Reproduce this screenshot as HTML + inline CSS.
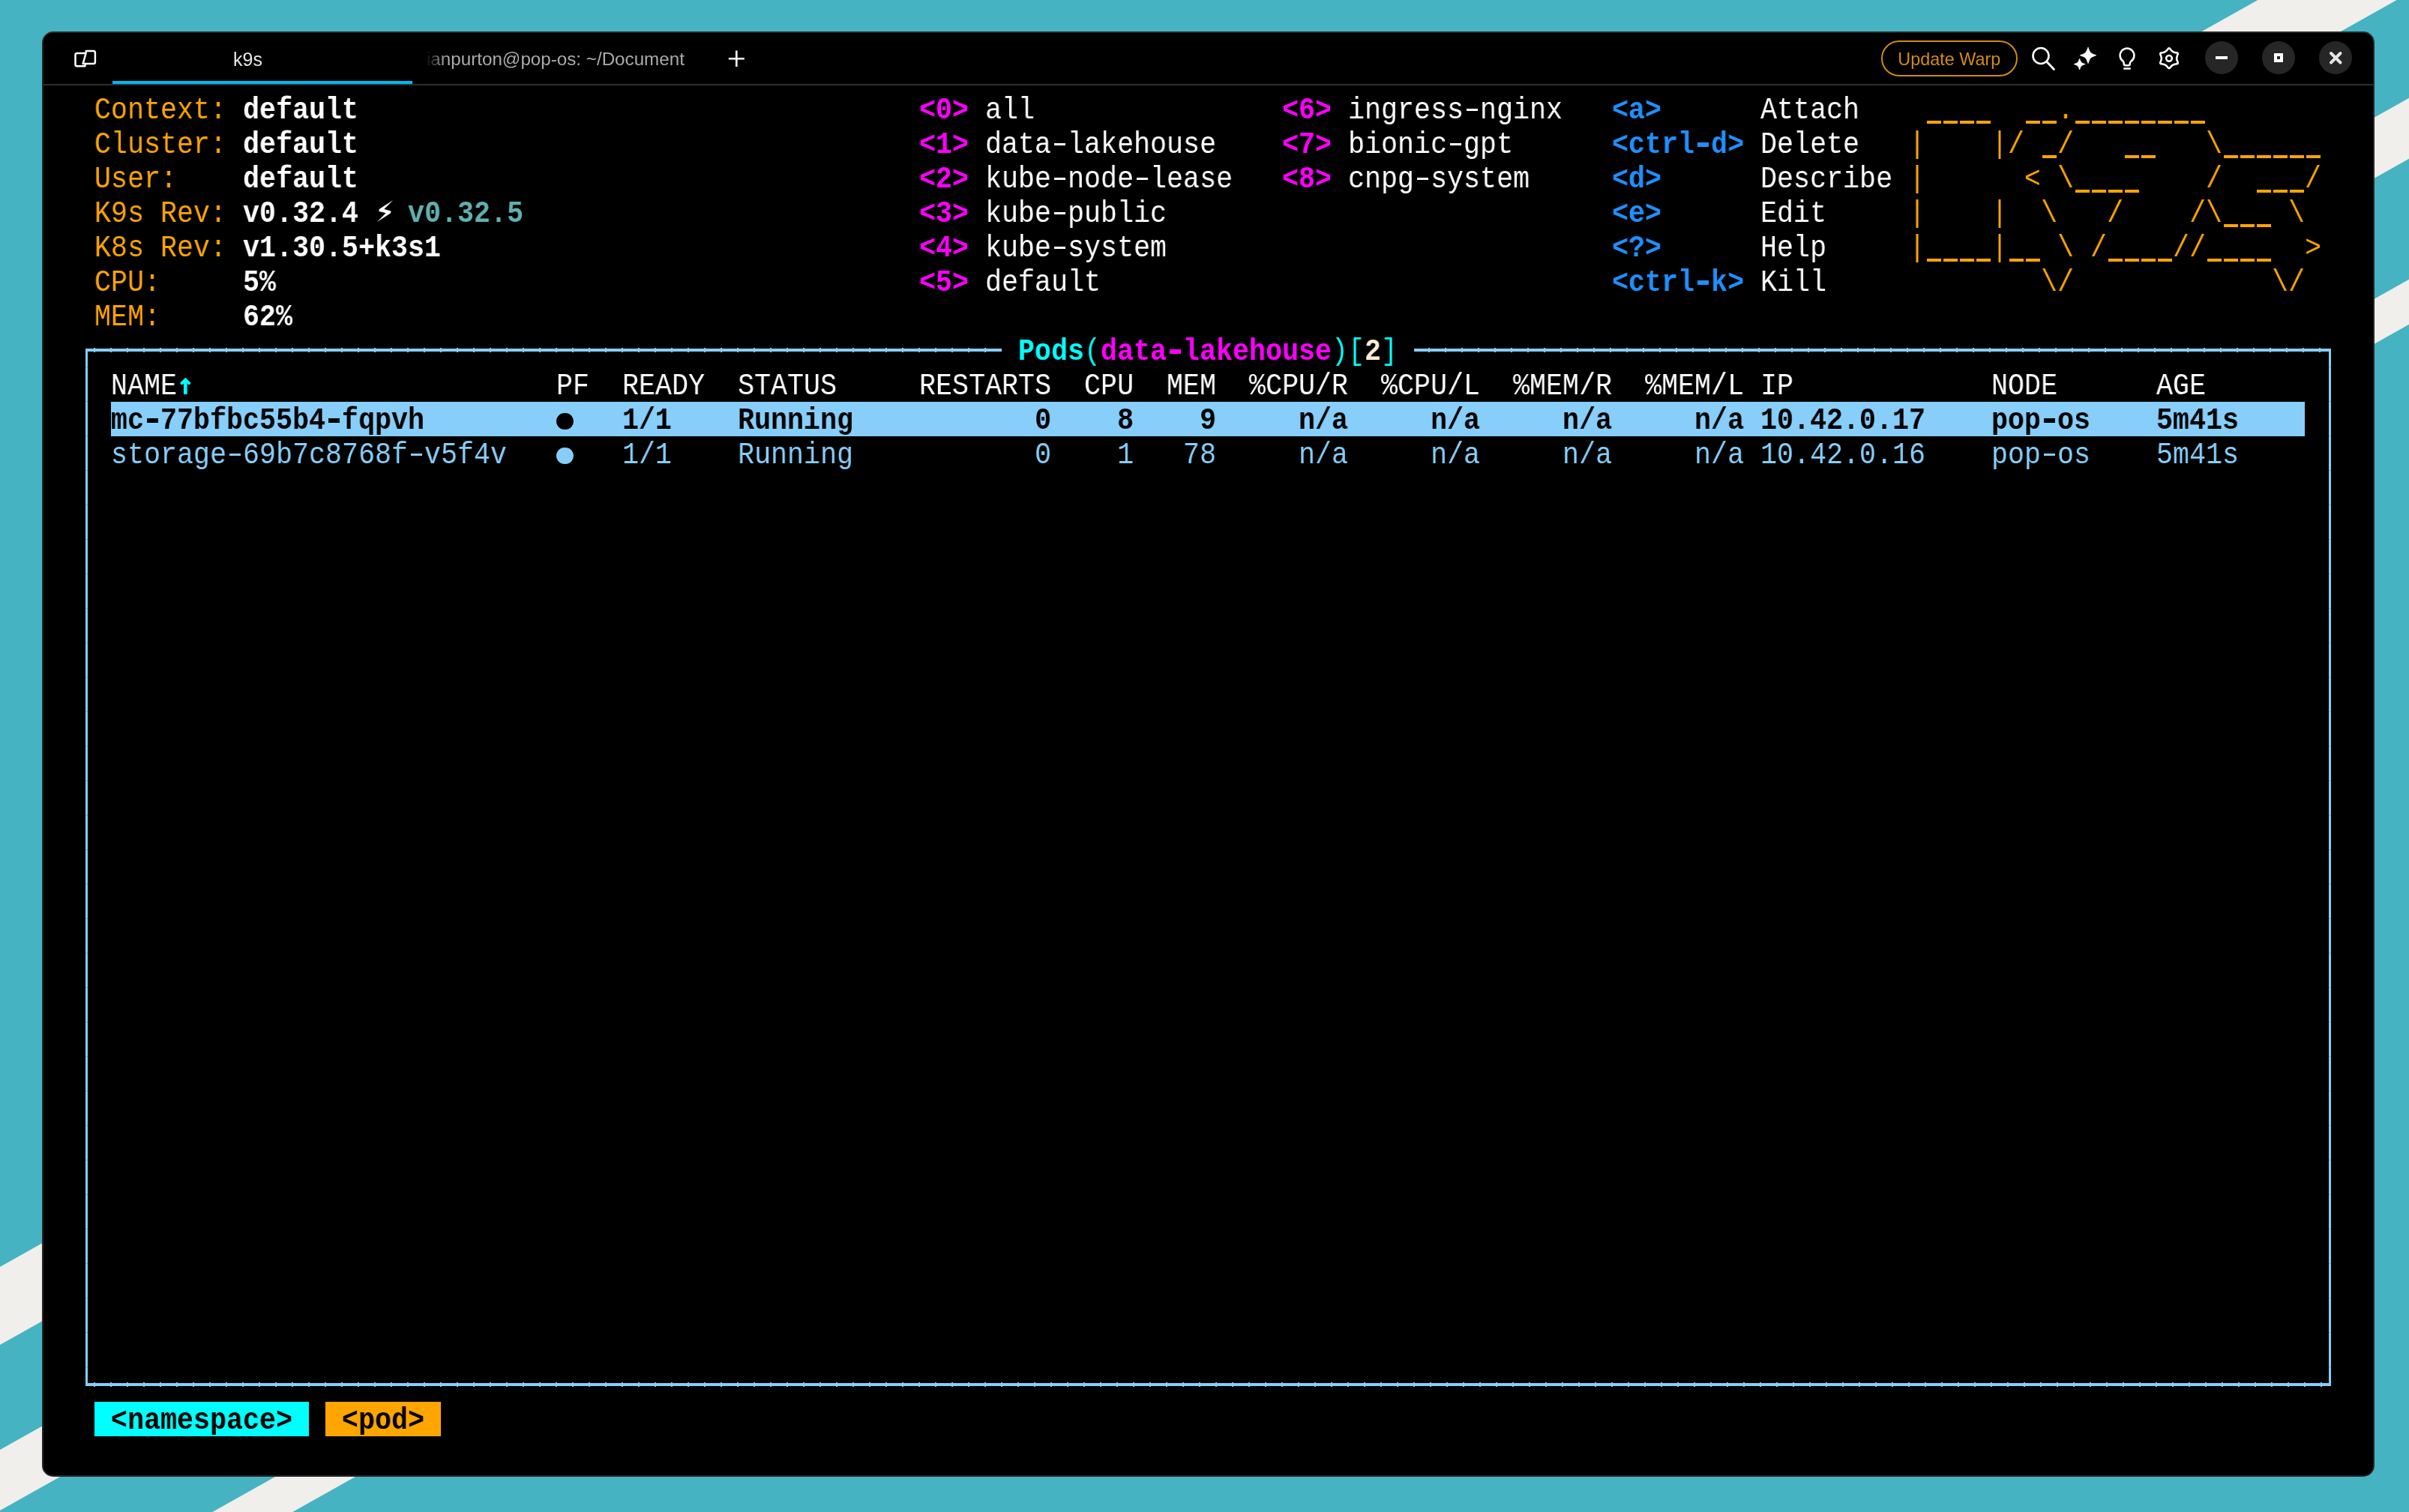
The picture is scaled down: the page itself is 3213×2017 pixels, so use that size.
<!DOCTYPE html>
<html><head><meta charset="utf-8"><title>k9s</title>
<style>
html,body{margin:0;padding:0;}
body{width:3213px;height:2017px;overflow:hidden;position:relative;background:#45b3c2;font-family:"Liberation Sans",sans-serif;}
.abs{position:absolute;}
#bg{position:absolute;left:0;top:0;}
#win{position:absolute;left:56px;top:42px;width:3111px;height:1927.5px;box-sizing:border-box;border:2px solid #2a2627;border-radius:15px;background:#000;}
#sep{left:58px;top:112px;width:3107px;height:2px;background:#2e2e2e;}
#uline{left:150px;top:108px;width:400px;height:4px;background:#00b9f2;}
.tabt{position:absolute;will-change:transform;top:62px;font-size:25px;line-height:30px;white-space:pre;}
#pill{will-change:transform;left:2509px;top:54px;width:181.5px;height:48px;box-sizing:border-box;border:2px solid #cf8b12;border-radius:24px;color:#d28c12;font-size:23.4px;line-height:46px;text-align:center;}
.circ{position:absolute;top:55px;width:44px;height:44px;border-radius:22px;background:#262626;}
.fl{position:absolute;background:#87cefa;}
.hy{position:absolute;}
.us{position:absolute;width:19.5px;height:3.8px;background:#ffa500;}
.dot{position:absolute;width:22.8px;height:22.8px;border-radius:50%;}
#sel{left:148px;top:536px;width:2926px;height:46px;background:#87cefa;}
.term{position:absolute;left:104px;top:0;width:3370px;height:2017px;transform:scaleX(0.905202);transform-origin:0 0;will-change:transform;font-family:"Liberation Mono",monospace;font-size:40.500px;}
.row{position:absolute;left:0;width:3370px;height:46px;line-height:46px;white-space:pre;}
.row span{position:absolute;top:0;}
</style></head><body>
<svg id="bg" width="3213" height="2017" viewBox="0 0 3213 2017">
<polygon fill="#f0efeb" points="0,1690 3011.4,0 3196.7,0 0,1794"/>
<polygon fill="#f0efeb" points="0,1934 3446.2,0 3590.5,0 0,2015"/>
<polygon fill="#f0efeb" points="0,2176 3877.4,0 3984.3,0 0,2236"/>
</svg>
<div id="win"></div>
<div id="sep" class="abs"></div>
<div id="uline" class="abs"></div>
<svg class="abs" style="left:90px;top:58px" width="48" height="40" viewBox="90 58 48 40">
<path d="M113.8 70.9 L102.8 70.9 Q100.5 70.9 100.5 73.2 L100.5 86 Q100.5 88.3 102.8 88.3 L113.3 88.3 L114 85.3" fill="none" stroke="#fff" stroke-width="2.5" stroke-linejoin="round"/>
<path d="M114.8 68.1 L124.6 68.1 Q126.9 68.1 126.9 70.4 L126.9 82.7 Q126.9 85 124.6 85 L110.6 85 L114.3 72 Z" fill="none" stroke="#fff" stroke-width="2.5" stroke-linejoin="round"/>
</svg>
<div class="tabt" style="left:311px;top:64px;font-size:25px;color:#e6e6e6">k9s</div>
<div class="tabt" style="left:569px;top:63.5px;font-size:24.2px;color:#ababab">ianpurton@pop-os: ~/Document</div>
<div class="abs" style="left:550px;top:60px;width:42px;height:40px;background:linear-gradient(90deg,#000 0px,rgba(0,0,0,0.9) 20px,rgba(0,0,0,0.72) 26px,rgba(0,0,0,0.35) 34px,rgba(0,0,0,0) 44px)"></div>
<svg class="abs" style="left:965px;top:60px" width="36" height="36" viewBox="965 60 36 36">
<path d="M982.3 67.5 V89 M971.8 78.2 H992.8" stroke="#fff" stroke-width="2.6"/>
</svg>
<div id="pill" class="abs">Update Warp</div>
<svg class="abs" style="left:2700px;top:55px" width="220" height="45" viewBox="2700 55 220 45">
<circle cx="2722" cy="74.5" r="10.5" fill="none" stroke="#fff" stroke-width="2.6"/>
<path d="M2729.5 82 L2739.5 92.5" stroke="#fff" stroke-width="2.8" stroke-linecap="round"/>
<path d="M2785.00 62.90 L2786.86 67.80 Q2788.00 70.80 2791.00 71.94 L2795.90 73.80 L2791.00 75.66 Q2788.00 76.80 2786.86 79.80 L2785.00 84.70 L2783.14 79.80 Q2782.00 76.80 2779.00 75.66 L2774.10 73.80 L2779.00 71.94 Q2782.00 70.80 2783.14 67.80 L2785.00 62.90 Z" fill="#fff" stroke="#fff" stroke-width="0.6" stroke-linejoin="round"/>
<path d="M2773.60 78.10 L2774.90 81.45 Q2775.70 83.50 2777.75 84.30 L2781.10 85.60 L2777.75 86.90 Q2775.70 87.70 2774.90 89.75 L2773.60 93.10 L2772.30 89.75 Q2771.50 87.70 2769.45 86.90 L2766.10 85.60 L2769.45 84.30 Q2771.50 83.50 2772.30 81.45 L2773.60 78.10 Z" fill="#fff" stroke="#fff" stroke-width="0.6" stroke-linejoin="round"/>
<path d="M2831.8 81.8 A9.4 9.4 0 1 1 2842.2 81.8 Q2840.7 83.2 2840.7 85 L2840.7 85.3 Q2840.7 87.3 2838.7 87.3 L2834.8 87.3 Q2832.8 87.3 2832.8 85.3 L2832.8 85 Q2832.8 83.2 2831.8 81.8 Z" fill="none" stroke="#fff" stroke-width="2.5" stroke-linejoin="round"/>
<path d="M2833.3 91.5 H2840.7" stroke="#fff" stroke-width="2.6" stroke-linecap="round"/>
<g transform="translate(2893 77.8)">
<path d="M-1.40 -12.50 Q0.00 -14.40 1.39 -12.50 L2.32 -11.23 Q4.65 -8.05 8.56 -7.63 L10.12 -7.46 Q12.47 -7.20 11.52 -5.04 L10.89 -3.60 Q9.30 -0.00 10.89 3.60 L11.52 5.04 Q12.47 7.20 10.12 7.46 L8.56 7.63 Q4.65 8.05 2.33 11.23 L1.40 12.50 Q0.00 14.40 -1.39 12.50 L-2.32 11.23 Q-4.65 8.05 -8.56 7.63 L-10.12 7.46 Q-12.47 7.20 -11.52 5.04 L-10.89 3.60 Q-9.30 0.00 -10.89 -3.60 L-11.52 -5.04 Q-12.47 -7.20 -10.12 -7.46 L-8.56 -7.63 Q-4.65 -8.05 -2.33 -11.23 Z" fill="none" stroke="#fff" stroke-width="2.6" stroke-linejoin="round"/>
<circle cx="0" cy="0" r="3.85" fill="none" stroke="#fff" stroke-width="2.6"/>
</g>
</svg>
<div class="circ" style="left:2941px"></div>
<div class="circ" style="left:3017px"></div>
<div class="circ" style="left:3093px"></div>
<div class="abs" style="left:2955px;top:74.5px;width:16.2px;height:4.7px;background:#fff"></div>
<div class="abs" style="left:3032.5px;top:70.8px;width:12.5px;height:12.5px;box-sizing:border-box;border:4.2px solid #fff"></div>
<svg class="abs" style="left:3100px;top:62px" width="30" height="30" viewBox="3100 62 30 30">
<path d="M3109 71 L3121.5 83.5 M3121.5 71 L3109 83.5" stroke="#e6e6e6" stroke-width="4" stroke-linecap="round"/>
</svg>
<!-- frame -->
<div class="abs" style="left:114px;top:464.3px;width:1210px;height:5.3px;background:repeating-linear-gradient(90deg,rgba(0,0,0,0) 0px,rgba(0,0,0,0) 11.2px,#80c4ee 11.2px,#80c4ee 12.8px,rgba(0,0,0,0) 12.8px,rgba(0,0,0,0) 22px)"></div>
<div class="abs" style="left:1894px;top:464.3px;width:1210px;height:5.3px;background:repeating-linear-gradient(90deg,rgba(0,0,0,0) 0px,rgba(0,0,0,0) 11.2px,#80c4ee 11.2px,#80c4ee 12.8px,rgba(0,0,0,0) 12.8px,rgba(0,0,0,0) 22px)"></div>
<div class="abs" style="left:114px;top:1844.3px;width:2990px;height:5.3px;background:repeating-linear-gradient(90deg,rgba(0,0,0,0) 0px,rgba(0,0,0,0) 11.2px,#80c4ee 11.2px,#80c4ee 12.8px,rgba(0,0,0,0) 12.8px,rgba(0,0,0,0) 22px)"></div>

<div class="fl" style="left:114px;top:465px;width:1222.4px;height:3.8px"></div>
<div class="fl" style="left:1885.6px;top:465px;width:1223.2px;height:3.8px"></div>
<div class="fl" style="left:114px;top:465px;width:3.2px;height:1383.8px;background:repeating-linear-gradient(180deg,#87cefa 0px,#87cefa 24px,#6fadd4 24px,#6fadd4 25px,#87cefa 25px,#87cefa 46px)"></div>
<div class="fl" style="left:3105.8px;top:465px;width:3px;height:1383.8px;background:repeating-linear-gradient(180deg,#87cefa 0px,#87cefa 24px,#6fadd4 24px,#6fadd4 25px,#87cefa 25px,#87cefa 46px)"></div>
<div class="fl" style="left:114px;top:1845px;width:2994.8px;height:3.8px"></div>
<div id="sel" class="abs"></div>
<div class="abs" style="left:126px;top:1869.5px;width:286px;height:46px;background:#00ffff"></div>
<div class="abs" style="left:434px;top:1869.5px;width:154px;height:46px;background:#ffa500"></div>
<!-- lightning -->
<svg class="abs" style="left:495px;top:260px" width="35" height="42" viewBox="495 260 35 42">
<polygon points="524,267.2 512.3,279 521.6,281.4 520.8,284.4 502.8,296.2 514.6,284.2 505.4,282 505.8,279" fill="#fff"/>
</svg>
<svg class="abs" style="left:236px;top:500px" width="24" height="30" viewBox="236 500 24 30">
<path d="M247.3 508 V526" stroke="#00ffff" stroke-width="4.7"/>
<path d="M242.5 511.2 L247.3 506.6 L252.1 511.2" fill="none" stroke="#00ffff" stroke-width="4" stroke-linecap="round" stroke-linejoin="miter"/>
</svg>
<div class="dot" style="left:742.2px;top:550.6px;background:#000"></div>
<div class="dot" style="left:742.2px;top:596.6px;background:#87cefa"></div>
<div class="us" style="left:2569.5px;top:161.3px"></div>
<div class="us" style="left:2591.5px;top:161.3px"></div>
<div class="us" style="left:2613.5px;top:161.3px"></div>
<div class="us" style="left:2635.5px;top:161.3px"></div>
<div class="us" style="left:2701.5px;top:161.3px"></div>
<div class="us" style="left:2723.5px;top:161.3px"></div>
<div class="us" style="left:2767.5px;top:161.3px"></div>
<div class="us" style="left:2789.5px;top:161.3px"></div>
<div class="us" style="left:2811.5px;top:161.3px"></div>
<div class="us" style="left:2833.5px;top:161.3px"></div>
<div class="us" style="left:2855.5px;top:161.3px"></div>
<div class="us" style="left:2877.5px;top:161.3px"></div>
<div class="us" style="left:2899.5px;top:161.3px"></div>
<div class="us" style="left:2921.5px;top:161.3px"></div>
<div class="us" style="left:2723.5px;top:207.3px"></div>
<div class="us" style="left:2833.5px;top:207.3px"></div>
<div class="us" style="left:2855.5px;top:207.3px"></div>
<div class="us" style="left:2965.5px;top:207.3px"></div>
<div class="us" style="left:2987.5px;top:207.3px"></div>
<div class="us" style="left:3009.5px;top:207.3px"></div>
<div class="us" style="left:3031.5px;top:207.3px"></div>
<div class="us" style="left:3053.5px;top:207.3px"></div>
<div class="us" style="left:3075.5px;top:207.3px"></div>
<div class="us" style="left:2767.5px;top:253.3px"></div>
<div class="us" style="left:2789.5px;top:253.3px"></div>
<div class="us" style="left:2811.5px;top:253.3px"></div>
<div class="us" style="left:2833.5px;top:253.3px"></div>
<div class="us" style="left:3009.5px;top:253.3px"></div>
<div class="us" style="left:3031.5px;top:253.3px"></div>
<div class="us" style="left:3053.5px;top:253.3px"></div>
<div class="us" style="left:2965.5px;top:299.3px"></div>
<div class="us" style="left:2987.5px;top:299.3px"></div>
<div class="us" style="left:3009.5px;top:299.3px"></div>
<div class="us" style="left:2569.5px;top:345.3px"></div>
<div class="us" style="left:2591.5px;top:345.3px"></div>
<div class="us" style="left:2613.5px;top:345.3px"></div>
<div class="us" style="left:2635.5px;top:345.3px"></div>
<div class="us" style="left:2679.5px;top:345.3px"></div>
<div class="us" style="left:2701.5px;top:345.3px"></div>
<div class="us" style="left:2811.5px;top:345.3px"></div>
<div class="us" style="left:2833.5px;top:345.3px"></div>
<div class="us" style="left:2855.5px;top:345.3px"></div>
<div class="us" style="left:2877.5px;top:345.3px"></div>
<div class="us" style="left:2943.5px;top:345.3px"></div>
<div class="us" style="left:2965.5px;top:345.3px"></div>
<div class="us" style="left:2987.5px;top:345.3px"></div>
<div class="us" style="left:3009.5px;top:345.3px"></div>
<div class="term">
<div class="row" style="top:124.17px"><span style="left:24.304px;color:#ffa500;">Context:</span><span style="left:243.040px;color:#ffffff;font-weight:bold;">default</span><span style="left:1239.502px;color:#ff00ff;font-weight:bold;">&lt;0&gt;</span><span style="left:1336.718px;color:#ffffff;">all</span><span style="left:1774.189px;color:#ff00ff;font-weight:bold;">&lt;6&gt;</span><span style="left:1871.405px;color:#ffffff;">ingress nginx</span><span style="left:2260.268px;color:#1e90ff;font-weight:bold;">&lt;a&gt;</span><span style="left:2479.003px;color:#ffffff;">Attach</span><span style="left:2697.739px;color:#ffa500;">         .               </span></div>
<div class="row" style="top:170.17px"><span style="left:24.304px;color:#ffa500;">Cluster:</span><span style="left:243.040px;color:#ffffff;font-weight:bold;">default</span><span style="left:1239.502px;color:#ff00ff;font-weight:bold;">&lt;1&gt;</span><span style="left:1336.718px;color:#ffffff;">data lakehouse</span><span style="left:1774.189px;color:#ff00ff;font-weight:bold;">&lt;7&gt;</span><span style="left:1871.405px;color:#ffffff;">bionic gpt</span><span style="left:2260.268px;color:#1e90ff;font-weight:bold;">&lt;ctrl d&gt;</span><span style="left:2479.003px;color:#ffffff;">Delete</span><span style="left:2697.739px;color:#ffa500;">|    |/  /        \      </span></div>
<div class="row" style="top:216.17px"><span style="left:24.304px;color:#ffa500;">User:</span><span style="left:243.040px;color:#ffffff;font-weight:bold;">default</span><span style="left:1239.502px;color:#ff00ff;font-weight:bold;">&lt;2&gt;</span><span style="left:1336.718px;color:#ffffff;">kube node lease</span><span style="left:1774.189px;color:#ff00ff;font-weight:bold;">&lt;8&gt;</span><span style="left:1871.405px;color:#ffffff;">cnpg system</span><span style="left:2260.268px;color:#1e90ff;font-weight:bold;">&lt;d&gt;</span><span style="left:2479.003px;color:#ffffff;">Describe</span><span style="left:2697.739px;color:#ffa500;">|      &lt; \        /     /</span></div>
<div class="row" style="top:262.17px"><span style="left:24.304px;color:#ffa500;">K9s Rev:</span><span style="left:243.040px;color:#ffffff;font-weight:bold;">v0.32.4</span><span style="left:486.079px;color:#62b0b0;font-weight:bold;">v0.32.5</span><span style="left:1239.502px;color:#ff00ff;font-weight:bold;">&lt;3&gt;</span><span style="left:1336.718px;color:#ffffff;">kube public</span><span style="left:2260.268px;color:#1e90ff;font-weight:bold;">&lt;e&gt;</span><span style="left:2479.003px;color:#ffffff;">Edit</span><span style="left:2697.739px;color:#ffa500;">|    |  \   /    /\    \ </span></div>
<div class="row" style="top:308.17px"><span style="left:24.304px;color:#ffa500;">K8s Rev:</span><span style="left:243.040px;color:#ffffff;font-weight:bold;">v1.30.5+k3s1</span><span style="left:1239.502px;color:#ff00ff;font-weight:bold;">&lt;4&gt;</span><span style="left:1336.718px;color:#ffffff;">kube system</span><span style="left:2260.268px;color:#1e90ff;font-weight:bold;">&lt;?&gt;</span><span style="left:2479.003px;color:#ffffff;">Help</span><span style="left:2697.739px;color:#ffa500;">|    |   \ /    //      &gt;</span></div>
<div class="row" style="top:354.17px"><span style="left:24.304px;color:#ffa500;">CPU:</span><span style="left:243.040px;color:#ffffff;font-weight:bold;">5%</span><span style="left:1239.502px;color:#ff00ff;font-weight:bold;">&lt;5&gt;</span><span style="left:1336.718px;color:#ffffff;">default</span><span style="left:2260.268px;color:#1e90ff;font-weight:bold;">&lt;ctrl k&gt;</span><span style="left:2479.003px;color:#ffffff;">Kill</span><span style="left:2697.739px;color:#ffa500;">        \/            \/ </span></div>
<div class="row" style="top:400.17px"><span style="left:24.304px;color:#ffa500;">MEM:</span><span style="left:243.040px;color:#ffffff;font-weight:bold;">62%</span></div>
<div class="row" style="top:446.17px"><span style="left:1385.325px;color:#00ffff;font-weight:bold;">Pods</span><span style="left:1482.541px;color:#00ffff;">(</span><span style="left:1506.845px;color:#ff00ff;font-weight:bold;">data lakehouse</span><span style="left:1847.101px;color:#00ffff;">)</span><span style="left:1871.405px;color:#00ffff;">[</span><span style="left:1895.708px;color:#ffefd5;font-weight:bold;">2</span><span style="left:1920.012px;color:#00ffff;">]</span></div>
<div class="row" style="top:492.17px"><span style="left:48.608px;color:#ffffff;">NAME</span><span style="left:704.815px;color:#ffffff;">PF</span><span style="left:802.031px;color:#ffffff;">READY</span><span style="left:972.158px;color:#ffffff;">STATUS</span><span style="left:1239.502px;color:#ffffff;">RESTARTS</span><span style="left:1482.541px;color:#ffffff;">CPU</span><span style="left:1604.061px;color:#ffffff;">MEM</span><span style="left:1725.581px;color:#ffffff;">%CPU/R</span><span style="left:1920.012px;color:#ffffff;">%CPU/L</span><span style="left:2114.444px;color:#ffffff;">%MEM/R</span><span style="left:2308.876px;color:#ffffff;">%MEM/L</span><span style="left:2479.003px;color:#ffffff;">IP</span><span style="left:2819.259px;color:#ffffff;">NODE</span><span style="left:3062.298px;color:#ffffff;">AGE</span></div>
<div class="row" style="top:538.17px"><span style="left:48.608px;color:#000000;font-weight:bold;">mc 77bfbc55b4 fqpvh</span><span style="left:802.031px;color:#000000;font-weight:bold;">1/1</span><span style="left:972.158px;color:#000000;font-weight:bold;">Running</span><span style="left:1409.629px;color:#000000;font-weight:bold;">0</span><span style="left:1531.149px;color:#000000;font-weight:bold;">8</span><span style="left:1652.669px;color:#000000;font-weight:bold;">9</span><span style="left:1798.493px;color:#000000;font-weight:bold;">n/a</span><span style="left:1992.924px;color:#000000;font-weight:bold;">n/a</span><span style="left:2187.356px;color:#000000;font-weight:bold;">n/a</span><span style="left:2381.788px;color:#000000;font-weight:bold;">n/a</span><span style="left:2479.003px;color:#000000;font-weight:bold;">10.42.0.17</span><span style="left:2819.259px;color:#000000;font-weight:bold;">pop os</span><span style="left:3062.298px;color:#000000;font-weight:bold;">5m41s</span></div>
<div class="row" style="top:584.17px"><span style="left:48.608px;color:#87cefa;">storage 69b7c8768f v5f4v</span><span style="left:802.031px;color:#87cefa;">1/1</span><span style="left:972.158px;color:#87cefa;">Running</span><span style="left:1409.629px;color:#87cefa;">0</span><span style="left:1531.149px;color:#87cefa;">1</span><span style="left:1628.365px;color:#87cefa;">78</span><span style="left:1798.493px;color:#87cefa;">n/a</span><span style="left:1992.924px;color:#87cefa;">n/a</span><span style="left:2187.356px;color:#87cefa;">n/a</span><span style="left:2381.788px;color:#87cefa;">n/a</span><span style="left:2479.003px;color:#87cefa;">10.42.0.16</span><span style="left:2819.259px;color:#87cefa;">pop os</span><span style="left:3062.298px;color:#87cefa;">5m41s</span></div>
<div class="row" style="top:1872.17px"><span style="left:24.304px;color:#000000;font-weight:bold;"> &lt;namespace&gt; </span><span style="left:364.559px;color:#000000;font-weight:bold;"> &lt;pod&gt; </span></div>
</div>
<div class="hy" style="left:1405.6px;top:191.2px;width:15.4px;height:3.3px;background:#ffffff"></div>
<div class="hy" style="left:1405.6px;top:237.2px;width:15.4px;height:3.3px;background:#ffffff"></div>
<div class="hy" style="left:1515.6px;top:237.2px;width:15.4px;height:3.3px;background:#ffffff"></div>
<div class="hy" style="left:1405.6px;top:283.2px;width:15.4px;height:3.3px;background:#ffffff"></div>
<div class="hy" style="left:1405.6px;top:329.2px;width:15.4px;height:3.3px;background:#ffffff"></div>
<div class="hy" style="left:1955.6px;top:145.2px;width:15.4px;height:3.3px;background:#ffffff"></div>
<div class="hy" style="left:1933.6px;top:191.2px;width:15.4px;height:3.3px;background:#ffffff"></div>
<div class="hy" style="left:1889.6px;top:237.2px;width:15.4px;height:3.3px;background:#ffffff"></div>
<div class="hy" style="left:2263.9px;top:190.0px;width:14.9px;height:5.5px;background:#1e90ff"></div>
<div class="hy" style="left:2263.9px;top:374.0px;width:14.9px;height:5.5px;background:#1e90ff"></div>
<div class="hy" style="left:1559.9px;top:466.0px;width:14.9px;height:5.5px;background:#ff00ff"></div>
<div class="hy" style="left:195.9px;top:558.0px;width:14.9px;height:5.5px;background:#000000"></div>
<div class="hy" style="left:437.9px;top:558.0px;width:14.9px;height:5.5px;background:#000000"></div>
<div class="hy" style="left:2725.9px;top:558.0px;width:14.9px;height:5.5px;background:#000000"></div>
<div class="hy" style="left:305.6px;top:605.2px;width:15.4px;height:3.3px;background:#87cefa"></div>
<div class="hy" style="left:547.6px;top:605.2px;width:15.4px;height:3.3px;background:#87cefa"></div>
<div class="hy" style="left:2725.6px;top:605.2px;width:15.4px;height:3.3px;background:#87cefa"></div>
</body></html>
